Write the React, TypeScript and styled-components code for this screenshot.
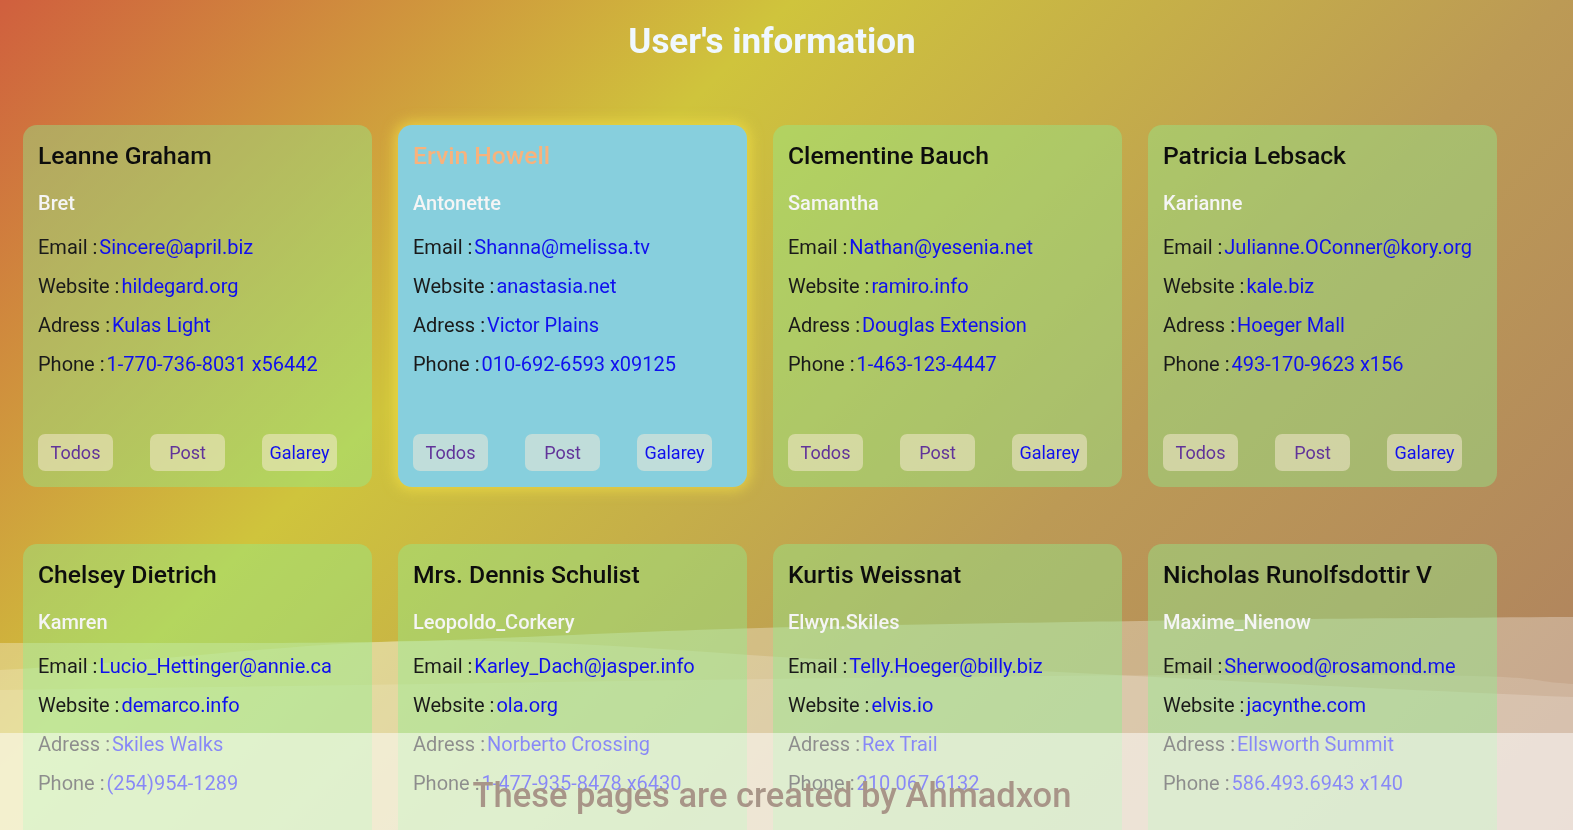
import React from "react";
import styled, { createGlobalStyle, css } from "styled-components";

type User = {
  name: string;
  username: string;
  email: string;
  website: string;
  street: string;
  phone: string;
};

const users: User[] = [
  { name: "Leanne Graham", username: "Bret", email: "Sincere@april.biz", website: "hildegard.org", street: "Kulas Light", phone: "1-770-736-8031 x56442" },
  { name: "Ervin Howell", username: "Antonette", email: "Shanna@melissa.tv", website: "anastasia.net", street: "Victor Plains", phone: "010-692-6593 x09125" },
  { name: "Clementine Bauch", username: "Samantha", email: "Nathan@yesenia.net", website: "ramiro.info", street: "Douglas Extension", phone: "1-463-123-4447" },
  { name: "Patricia Lebsack", username: "Karianne", email: "Julianne.OConner@kory.org", website: "kale.biz", street: "Hoeger Mall", phone: "493-170-9623 x156" },
  { name: "Chelsey Dietrich", username: "Kamren", email: "Lucio_Hettinger@annie.ca", website: "demarco.info", street: "Skiles Walks", phone: "(254)954-1289" },
  { name: "Mrs. Dennis Schulist", username: "Leopoldo_Corkery", email: "Karley_Dach@jasper.info", website: "ola.org", street: "Norberto Crossing", phone: "1-477-935-8478 x6430" },
  { name: "Kurtis Weissnat", username: "Elwyn.Skiles", email: "Telly.Hoeger@billy.biz", website: "elvis.io", street: "Rex Trail", phone: "210.067.6132" },
  { name: "Nicholas Runolfsdottir V", username: "Maxime_Nienow", email: "Sherwood@rosamond.me", website: "jacynthe.com", street: "Ellsworth Summit", phone: "586.493.6943 x140" },
  { name: "Glenna Reichert", username: "Delphine", email: "Chaim_McDermott@dana.io", website: "conrad.com", street: "Dayna Park", phone: "(775)976-6794 x41206" },
  { name: "Clementina DuBuque", username: "Moriah.Stanton", email: "Rey.Padberg@karina.biz", website: "ambrose.net", street: "Kattie Turnpike", phone: "024-648-3804" },
];

const GlobalStyle = createGlobalStyle`
  html, body {
    margin: 0;
    padding: 0;
  }
  body {
    font-family: Roboto, "Noto Sans", "Liberation Sans", Arial, sans-serif;
    background: linear-gradient(135deg, #d05f3e 0%, #cfc43c 33%, #bc9a55 65%, #ae8060 100%);
    background-attachment: fixed;
    min-height: 100vh;
  }
`;

const Page = styled.main`
  position: relative;
  z-index: 1;
  width: 1498px;
  padding: 0 0 140px 23px;
`;

const Title = styled.h1`
  margin: 0;
  padding-top: 21px;
  font-size: 35px;
  line-height: 41px;
  font-weight: 700;
  color: #f0f8ff;
  text-align: center;
`;

const Grid = styled.section`
  margin-top: 63px;
  display: grid;
  grid-template-columns: repeat(4, 349px);
  column-gap: 26px;
  row-gap: 57px;
`;

const Card = styled.article<{ $active?: boolean }>`
  height: 362px;
  box-sizing: border-box;
  padding: 17px 15px 16px;
  border-radius: 14px;
  display: flex;
  flex-direction: column;
  background: rgba(144, 238, 144, 0.42);
  ${(p) =>
    p.$active &&
    css`
      background: #87cfdd;
      box-shadow: 0 0 14px 3px rgba(245, 225, 70, 0.7);
    `}
`;

const Name = styled.h2<{ $active?: boolean }>`
  margin: 0;
  font-size: 24.7px;
  line-height: 28px;
  font-weight: 500;
  color: ${(p) => (p.$active ? "#f8b27c" : "#0d0d0d")};
  white-space: nowrap;
`;

const Username = styled.h3`
  margin: 21px 0 0;
  font-size: 20px;
  line-height: 24px;
  font-weight: 500;
  color: #f5f5f5;
`;

const InfoList = styled.div`
  margin-top: 20px;
  display: flex;
  flex-direction: column;
  gap: 15px;
`;

const InfoRow = styled.p`
  margin: 0;
  font-size: 20px;
  line-height: 24px;
  color: #1a1a1a;
  white-space: nowrap;
`;

const InfoLink = styled.a`
  margin-left: 2px;
  color: #1010ee;
  text-decoration: none;
`;

const Actions = styled.div`
  margin-top: auto;
  display: flex;
  gap: 37px;
`;

const ActionButton = styled.a<{ $visited?: boolean }>`
  width: 75px;
  height: 37px;
  border-radius: 7px;
  background: rgba(250, 235, 215, 0.5);
  display: flex;
  align-items: center;
  justify-content: center;
  font-size: 18px;
  text-decoration: none;
  color: ${(p) => (p.$visited ? "#61339a" : "#1010ee")};
`;

const WaveBackdrop = styled.svg`
  position: fixed;
  left: 0;
  bottom: 0;
  z-index: 0;
  width: 100%;
  height: 215px;
  pointer-events: none;
`;

const Footer = styled.footer`
  position: fixed;
  left: 0;
  right: 0;
  bottom: 0;
  z-index: 2;
  height: 97px;
  background: rgba(255, 255, 255, 0.5);
  pointer-events: none;
  display: flex;
  flex-direction: column;
  justify-content: flex-end;
`;

const Caption = styled.p`
  margin: 0 0 15px 23px;
  width: 1498px;
  text-align: center;
  font-size: 34.5px;
  line-height: 40px;
  font-weight: 500;
  color: #a89588;
`;

const InfoLine = ({ label, value }: { label: string; value: string }) => (
  <InfoRow>
    {label} :<InfoLink href="#">{value}</InfoLink>
  </InfoRow>
);

export default function App() {
  return (
    <>
      <GlobalStyle />
      <WaveBackdrop viewBox="0 0 1573 215" preserveAspectRatio="none">
        <path
          d="M0,28 C200,28 350,29 450,25 C600,19 700,14 800,12 C1000,8 1200,4 1573,2 L1573,215 L0,215 Z"
          fill="#ffffff"
          fillOpacity="0.3"
        />
        <path
          d="M0,55 C150,47 280,30 400,26 C520,23 650,33 780,42 C1050,57 1350,73 1573,82 L1573,215 L0,215 Z"
          fill="#ffffff"
          fillOpacity="0.18"
        />
        <path
          d="M0,75 C400,70 800,62 1200,60 S1500,65 1573,69 L1573,215 L0,215 Z"
          fill="#ffffff"
          fillOpacity="0.13"
        />
      </WaveBackdrop>
      <Page>
        <Title>User's information</Title>
        <Grid>
          {users.map((u, i) => {
            const active = i === 1;
            return (
              <Card key={u.username} $active={active}>
                <Name $active={active}>{u.name}</Name>
                <Username>{u.username}</Username>
                <InfoList>
                  <InfoLine label="Email" value={u.email} />
                  <InfoLine label="Website" value={u.website} />
                  <InfoLine label="Adress" value={u.street} />
                  <InfoLine label="Phone" value={u.phone} />
                </InfoList>
                <Actions>
                  <ActionButton href="#" $visited>Todos</ActionButton>
                  <ActionButton href="#" $visited>Post</ActionButton>
                  <ActionButton href="#">Galarey</ActionButton>
                </Actions>
              </Card>
            );
          })}
        </Grid>
      </Page>
      <Footer>
        <Caption>These pages are created by Ahmadxon</Caption>
      </Footer>
    </>
  );
}
